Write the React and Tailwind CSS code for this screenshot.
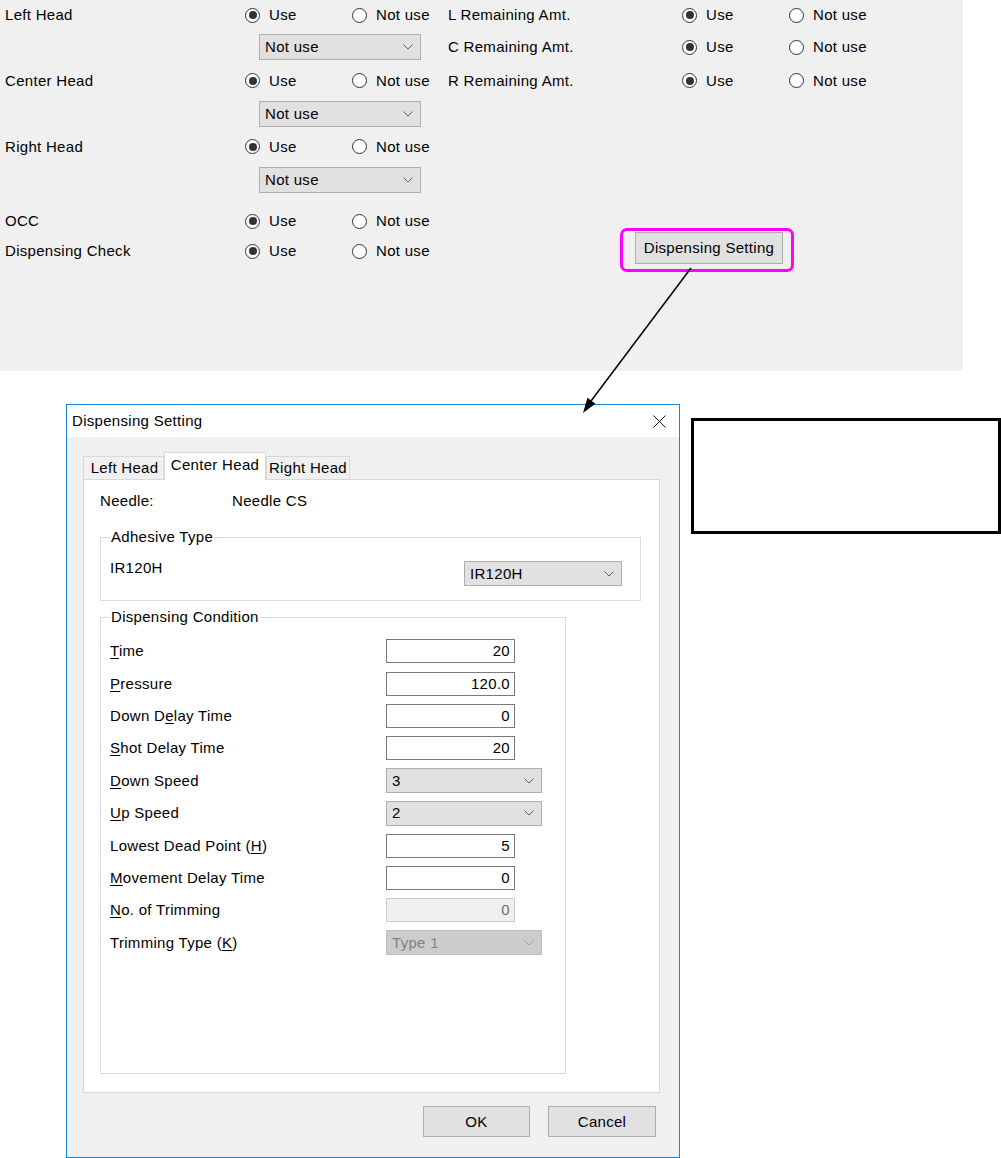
import React from 'react';

function Chevron({ color = '#606060' }) {
  return (
    <svg width="10" height="6" viewBox="0 0 10 6" fill="none">
      <polyline points="0.5,0.5 5,5 9.5,0.5" stroke={color} strokeWidth="1" />
    </svg>
  );
}

function Radio({ checked, label }) {
  return (
    <div className="flex items-center">
      <span className="w-[15px] h-[15px] rounded-full border border-[#333333] bg-white flex items-center justify-center">
        {checked && <span className="w-[8px] h-[8px] rounded-full bg-[#333333]" />}
      </span>
      <span className="ml-[9px]">{label}</span>
    </div>
  );
}

function UseRadios() {
  return (
    <div className="flex items-center">
      <div className="w-[107px]">
        <Radio checked label="Use" />
      </div>
      <Radio label="Not use" />
    </div>
  );
}

function Combo({ value, className = '', disabled }) {
  return (
    <div
      className={`flex items-center justify-between border pl-[5px] pr-[7px] ${
        disabled ? 'border-[#bfbfbf] bg-[#cccccc] text-[#838383]' : 'border-[#adadad] bg-[#e1e1e1]'
      } ${className}`}
    >
      <span>{value}</span>
      <Chevron color={disabled ? '#a0a0a0' : '#606060'} />
    </div>
  );
}

function TextBox({ value, disabled }) {
  return (
    <div
      className={`w-[129px] h-[24px] border flex items-center justify-end pr-[4px] ${
        disabled ? 'border-[#cccccc] bg-[#f0f0f0] text-[#6d6d6d]' : 'border-[#7a7a7a] bg-white'
      }`}
    >
      {value}
    </div>
  );
}

// label with the underlined access key
function Mn({ pre = '', k, post = '' }) {
  return (
    <span>
      {pre}
      <span className="underline underline-offset-2">{k}</span>
      {post}
    </span>
  );
}

const conditionRows = [
  { label: <Mn k="T" post="ime" />, type: 'text', value: '20' },
  { label: <Mn k="P" post="ressure" />, type: 'text', value: '120.0' },
  { label: <Mn pre="Down D" k="e" post="lay Time" />, type: 'text', value: '0' },
  { label: <Mn k="S" post="hot Delay Time" />, type: 'text', value: '20' },
  { label: <Mn k="D" post="own Speed" />, type: 'combo', value: '3' },
  { label: <Mn k="U" post="p Speed" />, type: 'combo', value: '2' },
  { label: <Mn pre="Lowest Dead Point (" k="H" post=")" />, type: 'text', value: '5' },
  { label: <Mn k="M" post="ovement Delay Time" />, type: 'text', value: '0' },
  { label: <Mn k="N" post="o. of Trimming" />, type: 'text', value: '0', disabled: true },
  { label: <Mn pre="Trimming Type (" k="K" post=")" />, type: 'combo', value: 'Type 1', disabled: true },
];

function TopPanel() {
  return (
    <div className="w-[963px] h-[371px] bg-[#f0f0f0] flex">
      {/* left column */}
      <div className="w-[448px] flex flex-col">
        <div className="h-[30px] flex items-center">
          <div className="w-[245px] pl-[5px]">Left Head</div>
          <UseRadios />
        </div>
        <div className="h-[34px] flex items-center">
          <Combo value="Not use" className="ml-[259px] w-[162px] h-[26px]" />
        </div>
        <div className="h-[33px] flex items-center">
          <div className="w-[245px] pl-[5px]">Center Head</div>
          <UseRadios />
        </div>
        <div className="h-[33px] flex items-center">
          <Combo value="Not use" className="ml-[259px] w-[162px] h-[26px]" />
        </div>
        <div className="h-[33px] flex items-center">
          <div className="w-[245px] pl-[5px]">Right Head</div>
          <UseRadios />
        </div>
        <div className="h-[33px] flex items-center">
          <Combo value="Not use" className="ml-[259px] w-[162px] h-[26px]" />
        </div>
        <div className="h-[32px] mt-[9px] flex items-center">
          <div className="w-[245px] pl-[5px]">OCC</div>
          <UseRadios />
        </div>
        <div className="h-[28px] flex items-center">
          <div className="w-[245px] pl-[5px]">Dispensing Check</div>
          <UseRadios />
        </div>
      </div>

      {/* right column */}
      <div className="flex-1 flex flex-col">
        <div className="h-[30px] flex items-center">
          <div className="w-[234px]">L Remaining Amt.</div>
          <UseRadios />
        </div>
        <div className="h-[34px] flex items-center">
          <div className="w-[234px]">C Remaining Amt.</div>
          <UseRadios />
        </div>
        <div className="h-[33px] flex items-center">
          <div className="w-[234px]">R Remaining Amt.</div>
          <UseRadios />
        </div>
        <div className="mt-[131px] ml-[172px] w-[174px] h-[44px] border-[3px] border-[#ff00ff] rounded-[7px] pl-[12px] pt-[1px]">
          <button className="w-[148px] h-[32px] bg-[#e1e1e1] border border-[#adadad] flex items-center justify-center">
            Dispensing Setting
          </button>
        </div>
      </div>
    </div>
  );
}

function Dialog() {
  return (
    <div className="w-[614px] h-[754px] border border-[#1883d7] flex flex-col">
      <div className="h-[32px] bg-white flex items-center justify-between pl-[5px] pr-[13px]">
        <span>Dispensing Setting</span>
        <svg width="13" height="13" viewBox="0 0 13 13">
          <line x1="0.5" y1="0.5" x2="12.5" y2="12.5" stroke="#111" strokeWidth="1" />
          <line x1="12.5" y1="0.5" x2="0.5" y2="12.5" stroke="#111" strokeWidth="1" />
        </svg>
      </div>

      <div className="flex-1 bg-[#f0f0f0] pt-[16px] pl-[16px] pr-[19px]">
        {/* tabs */}
        <div className="h-[26px] flex items-end">
          <div className="w-[81px] h-[23px] border border-b-0 border-[#d9d9d9] bg-[#f0f0f0] flex items-center justify-center pl-[2px]">
            Left Head
          </div>
          <div className="relative z-10 -mb-[1px] w-[102px] h-[28px] border border-b-0 border-[#d9d9d9] bg-white flex items-start justify-center pt-[3px]">
            Center Head
          </div>
          <div className="w-[84px] h-[23px] border border-b-0 border-[#d9d9d9] bg-[#f0f0f0] flex items-center justify-center">
            Right Head
          </div>
        </div>

        {/* tab page */}
        <div className="w-[577px] h-[614px] border border-[#d9d9d9] bg-white pt-[12px] pl-[16px]">
          <div className="flex">
            <span className="w-[132px]">Needle:</span>
            <span>Needle CS</span>
          </div>

          <fieldset className="mt-[18px] w-[541px] h-[73px] border border-[#dcdcdc] pl-[9px] pr-[18px]">
            <legend className="px-[1px]">Adhesive Type</legend>
            <div className="flex justify-between items-start pt-[13px]">
              <span>IR120H</span>
              <Combo value="IR120H" className="mt-[2px] w-[158px] h-[25px]" />
            </div>
          </fieldset>

          <fieldset className="mt-[7px] w-[466px] h-[466px] border border-[#dcdcdc] pl-[9px]">
            <legend className="px-[1px]">Dispensing Condition</legend>
            <div className="pt-[9px] flex flex-col">
              {conditionRows.map((row, i) => (
                <div key={i} className="h-[32.4px] flex items-center">
                  <div className="w-[276px]">{row.label}</div>
                  {row.type === 'text' ? (
                    <TextBox value={row.value} disabled={row.disabled} />
                  ) : (
                    <Combo value={row.value} disabled={row.disabled} className="w-[156px] h-[25px]" />
                  )}
                </div>
              ))}
            </div>
          </fieldset>
        </div>

        <div className="mt-[13px] flex justify-end gap-[18px] pr-[4px]">
          <button className="w-[107px] h-[31px] bg-[#e1e1e1] border border-[#adadad]">OK</button>
          <button className="w-[108px] h-[31px] bg-[#e1e1e1] border border-[#adadad]">Cancel</button>
        </div>
      </div>
    </div>
  );
}

export default function App() {
  return (
    <div className="relative w-[1001px] h-[1158px] overflow-hidden bg-white text-black text-[15px] leading-[18px] tracking-[0.02em] font-['Liberation_Sans',Arial,sans-serif]">
      <TopPanel />
      <div className="flex mt-[33px] pl-[66px]">
        <Dialog />
        <div className="ml-[11px] mt-[14px] w-[310px] h-[116px] border-[3px] border-black" />
      </div>

      {/* callout arrow */}
      <svg className="absolute inset-0 pointer-events-none" width="1001" height="1158">
        <line x1="691" y1="268" x2="591" y2="401" stroke="#000" strokeWidth="1.5" />
        <polygon points="583,413 595.4,403.8 587.4,397.8" fill="#000" />
      </svg>
    </div>
  );
}
